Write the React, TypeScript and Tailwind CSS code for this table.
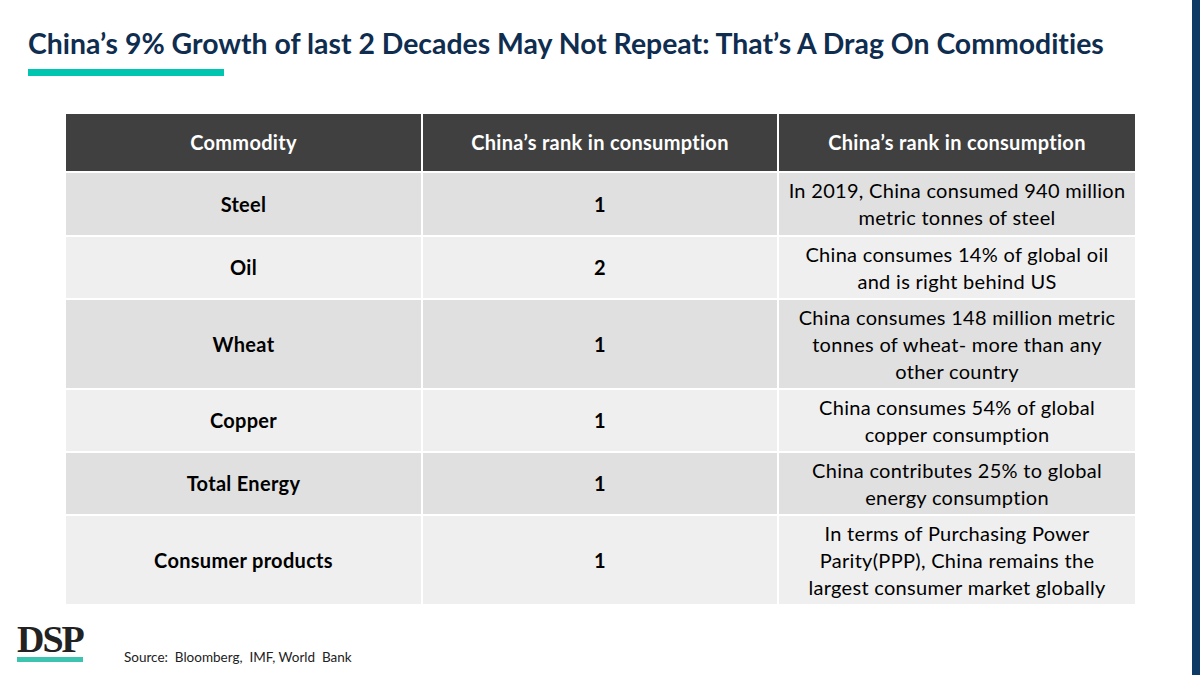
import React from "react";

const rows = [
  { c: "Steel", r: "1", d: ["In 2019, China consumed 940 million", "metric tonnes of steel"], dark: true },
  { c: "Oil", r: "2", d: ["China consumes 14% of global oil", "and is right behind US"], dark: false },
  { c: "Wheat", r: "1", d: ["China consumes 148 million metric", "tonnes of wheat- more than any", "other country"], dark: true },
  { c: "Copper", r: "1", d: ["China consumes 54% of global", "copper consumption"], dark: false },
  { c: "Total Energy", r: "1", d: ["China contributes 25% to global", "energy consumption"], dark: true },
  { c: "Consumer products", r: "1", d: ["In terms of Purchasing Power", "Parity(PPP), China remains the", "largest consumer market globally"], dark: false },
];

export default function App() {
  return (
    <div className="w-[1200px] h-[675px] bg-white flex overflow-hidden [font-variant-ligatures:none]" style={{ fontFamily: "Lato, 'Liberation Sans', sans-serif" }}>
      <div className="flex-1 flex flex-col">
        <div className="pl-[28px] pt-[27px] h-[64px] text-[28.4px] leading-[32px] font-bold text-[#0f2d4f] whitespace-nowrap">
          China’s 9% Growth of last 2 Decades May Not Repeat: That’s A Drag On Commodities
        </div>
        <div className="ml-[28px] mt-[5px] w-[196px] h-[7px] bg-[#00c5b0]" />
        <div className="ml-[66px] mt-[38px] grid grid-cols-[355px_354px_356px] grid-rows-[57px_62px_61px_88px_61px_61px_88px] gap-[2px] text-[20px] leading-[27px] tracking-[0.3px] text-black">
          <div className="bg-[#404040] text-white font-bold flex items-center justify-center">Commodity</div>
          <div className="bg-[#404040] text-white font-bold flex items-center justify-center">China’s rank in consumption</div>
          <div className="bg-[#404040] text-white font-bold flex items-center justify-center">China’s rank in consumption</div>
          {rows.map((row) => {
            const bg = row.dark ? "bg-[#e0e0e0]" : "bg-[#efefef]";
            return (
              <React.Fragment key={row.c}>
                <div className={`${bg} font-bold flex items-center justify-center`}>{row.c}</div>
                <div className={`${bg} font-bold flex items-center justify-center`}>{row.r}</div>
                <div className={`${bg} flex flex-col items-center justify-center text-center`}>
                  {row.d.map((l) => (
                    <span key={l}>{l}</span>
                  ))}
                </div>
              </React.Fragment>
            );
          })}
        </div>
        <div className="flex items-start mt-[18px]">
          <div className="ml-[17px] flex flex-col items-start">
            <div className="text-[38px] leading-[34px] font-bold text-[#222] tracking-[-2px]" style={{ fontFamily: "'Liberation Serif', serif" }}>DSP</div>
            <div className="mt-[1px] w-[66px] h-[5px] bg-[#3cc4b1]" />
          </div>
          <div className="ml-[41px] mt-[27px] text-[13.5px] leading-[16px] text-[#222]">Source:&nbsp; Bloomberg,&nbsp; IMF, World&nbsp; Bank</div>
        </div>
      </div>
      <div className="w-[8px] h-full bg-[#0d3b66]" />
    </div>
  );
}
